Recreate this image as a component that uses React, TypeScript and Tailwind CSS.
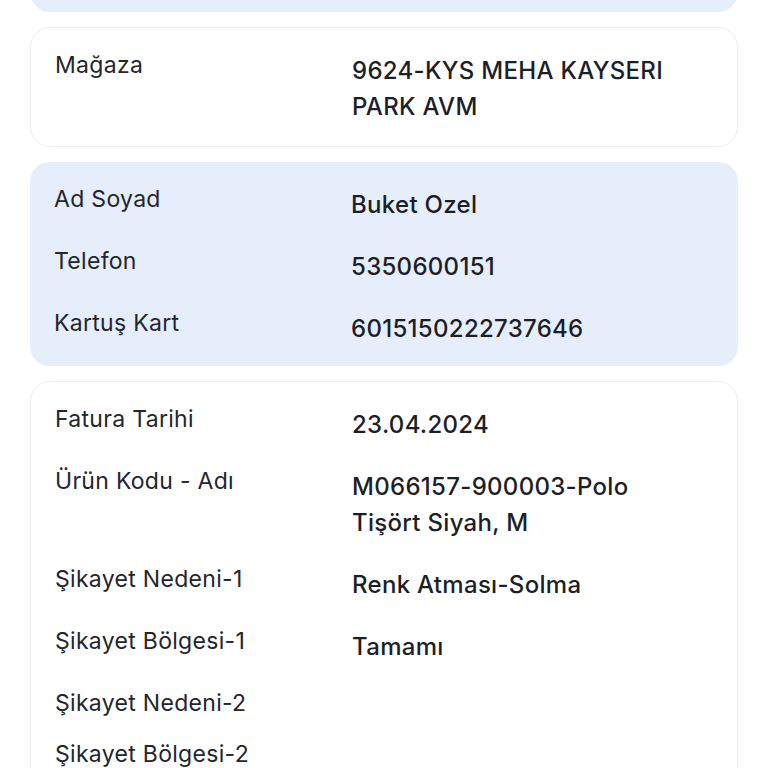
const font = { fontFamily: 'Inter, "Noto Sans", sans-serif' };

type Row = { label: string; value?: string[] };

const cards: { tone: 'white' | 'blue'; rows: Row[] }[] = [
  { tone: 'white', rows: [{ label: 'Mağaza', value: ['9624-KYS MEHA KAYSERI', 'PARK AVM'] }] },
  {
    tone: 'blue',
    rows: [
      { label: 'Ad Soyad', value: ['Buket Ozel'] },
      { label: 'Telefon', value: ['5350600151'] },
      { label: 'Kartuş Kart', value: ['6015150222737646'] },
    ],
  },
  {
    tone: 'white',
    rows: [
      { label: 'Fatura Tarihi', value: ['23.04.2024'] },
      { label: 'Ürün Kodu - Adı', value: ['M066157-900003-Polo', 'Tişört Siyah, M'] },
      { label: 'Şikayet Nedeni-1', value: ['Renk Atması-Solma'] },
      { label: 'Şikayet Bölgesi-1', value: ['Tamamı'] },
      { label: 'Şikayet Nedeni-2' },
      { label: 'Şikayet Bölgesi-2' },
    ],
  },
];

function InfoRow({ row }: { row: Row }) {
  return (
    <div className="flex">
      <div className="w-[297px] shrink-0 text-[23px] leading-[25px] tracking-[0.3px] text-[#23262d]">{row.label}</div>
      {row.value && (
        <div className="text-[24px] font-medium leading-[36px] tracking-[0.3px] text-[#1c1f27]">
          {row.value.map((line) => <div key={line}>{line}</div>)}
        </div>
      )}
    </div>
  );
}

export default function App() {
  return (
    <div className="h-[768px] overflow-hidden bg-white" style={font}>
      <div className="-mt-[38px] flex flex-col gap-[15px] px-[30px]">
        <div className="h-[50px] rounded-[20px] bg-[#e6eefb]" />
        {cards.map((card, i) => (
          <div
            key={i}
            className={`flex flex-col gap-[26px] rounded-[20px] pl-[24px] pr-[20px] pt-[25px] ${
              card.tone === 'blue' ? 'bg-[#e6eefb] pb-[19px]' : 'border border-[#eceef2] bg-white pb-[21px]'
            }`}
          >
            {card.rows.map((row) => (
              <InfoRow key={row.label} row={row} />
            ))}
          </div>
        ))}
      </div>
    </div>
  );
}
